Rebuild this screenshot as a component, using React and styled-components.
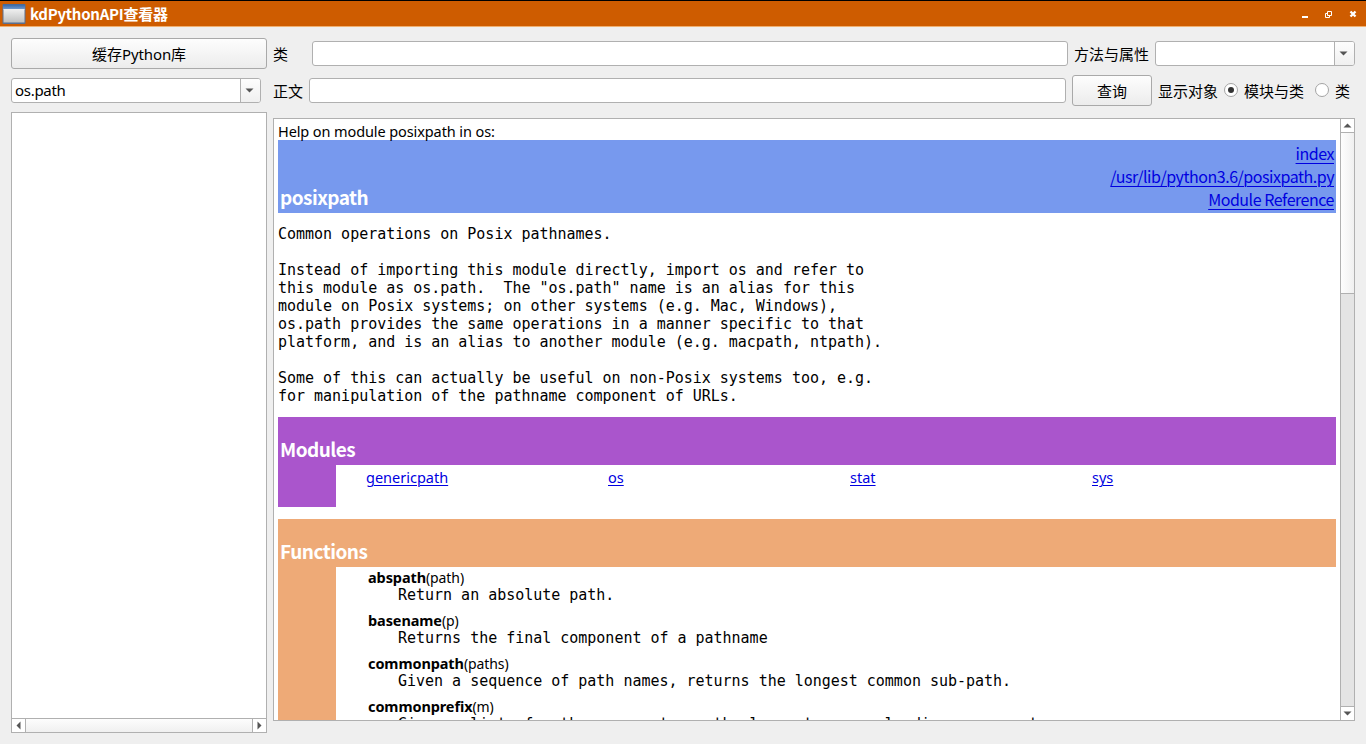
import React from "react";
import styled, { createGlobalStyle } from "styled-components";

const ui = `"Noto Sans", "Noto Sans CJK SC", sans-serif`;
const cjk = `"Noto Sans CJK SC", "Noto Sans", sans-serif`;
const border = "#b0b0b0";

const Global = createGlobalStyle`
  * { box-sizing: border-box; }
  body { margin: 0; background: #efefef; overflow: hidden; }
`;

const Window = styled.div`
  width: 1366px;
  height: 744px;
  display: flex;
  flex-direction: column;
  background: #efefef;
  color: #000;
  font: 15px/20px ${ui};
  white-space: nowrap;
`;

const TitleBar = styled.header`
  height: 27px;
  flex: none;
  display: flex;
  align-items: center;
  padding: 1px 8px 0 2px;
  border-top: 1px solid #000;
  border-bottom: 1px solid #f0b070;
  background: #ce5c00;
  color: #fff;
`;

const Title = styled.h1`
  margin: 0 auto 0 4px;
  font: 700 15px/24px ${cjk};
  letter-spacing: -0.27px;
`;

const Controls = styled.div`
  display: flex;
  gap: 14px;
  svg { display: block; }
`;

const Body = styled.main`
  flex: 1;
  min-height: 0;
  display: flex;
  gap: 6px;
  padding: 11px 11px 0;
`;

const Side = styled.aside`
  width: 256px;
  flex: none;
  display: flex;
  flex-direction: column;
  align-items: flex-start;
`;

const Main = styled.section`
  width: 1082px;
  flex: none;
  display: flex;
  flex-direction: column;
`;

const Button = styled.button`
  width: ${(p) => p.$w}px;
  height: 31px;
  flex: none;
  padding: 0;
  border: 1px solid #a9a9a9;
  border-radius: 3px;
  background: linear-gradient(#fdfdfd, #ececec);
  font: 15px/20px ${cjk};
  color: #000;
`;

const Latin = styled.span`
  font-family: ${ui};
  letter-spacing: -0.1px;
`;

const Field = styled.div`
  width: ${(p) => p.$w}px;
  height: 25px;
  flex: none;
  display: flex;
  margin: ${(p) => p.$m || 0};
  border: 1px solid ${border};
  border-radius: 3px;
  background: #fff;
`;

const Value = styled.span`
  flex: 1;
  padding: 1px 3px;
  letter-spacing: -0.3px;
`;

const DropArrow = styled.span`
  width: 20px;
  display: flex;
  align-items: center;
  justify-content: center;
  padding-right: 2px;
  border-left: 1px solid ${border};
  border-radius: 0 2px 2px 0;
  background: linear-gradient(#fdfdfd, #f0f0f0);
`;

const Row = styled.div`
  display: flex;
  height: ${(p) => p.$h}px;
  align-items: center;
  flex: none;
`;

const Label = styled.label`
  width: ${(p) => p.$w}px;
  flex: none;
  padding: 1px 0 0 ${(p) => p.$pad || 0}px;
  font: 15px/20px ${cjk};
`;

const Radio = styled.span`
  width: 14px;
  height: 14px;
  flex: none;
  display: grid;
  place-items: center;
  margin: 0 6px 2px 0;
  border: 1px solid #a4a4a4;
  border-radius: 50%;
  background: #fff;
  &::after {
    content: "";
    width: 6px;
    height: 6px;
    border-radius: 50%;
    background: ${(p) => (p.$on ? "#333" : "transparent")};
  }
`;

const List = styled.div`
  width: 256px;
  height: 621px;
  flex: none;
  display: flex;
  flex-direction: column;
  justify-content: flex-end;
  margin-top: 9px;
  border: 1px solid ${border};
  background: #fff;
`;

const HScroll = styled.div`
  height: 14px;
  display: flex;
  justify-content: space-between;
  border-top: 1px solid ${border};
  background: linear-gradient(#fdfdfd, #f0f0f0);
`;

const ScrollEnd = styled.span`
  width: ${(p) => p.$w}px;
  height: ${(p) => p.$h}px;
  flex: none;
  display: flex;
  align-items: center;
  justify-content: center;
  background: #fff;
  border: 0 solid ${border};
  border-width: ${(p) => p.$bw};
`;

const Viewer = styled.div`
  height: 603px;
  display: flex;
  margin-top: 6px;
  border: 1px solid ${border};
  background: #fff;
`;

const Doc = styled.article`
  flex: 1;
  min-width: 0;
  overflow: hidden;
  padding: 3px 4px 0;
`;

const VScroll = styled.div`
  width: 14px;
  flex: none;
  display: flex;
  flex-direction: column;
  border-left: 1px solid ${border};
  background: #e4e4e4;
`;

const Thumb = styled.div`
  height: 161px;
  margin-bottom: auto;
  border-bottom: 1px solid ${border};
  background: linear-gradient(90deg, #fdfdfd, #f0f0f0);
`;

const Intro = styled.p`
  height: 18px;
  margin: 0;
  font-size: 14.5px;
  line-height: 19px;
  letter-spacing: -0.1px;
`;

const Band = styled.div`
  height: ${(p) => p.$h}px;
  display: flex;
  justify-content: space-between;
  align-items: flex-end;
  padding: 0 2px 2px;
  background: ${(p) => p.$c};
`;

const Heading = styled.h2`
  margin: 0;
  color: #fff;
  font: 700 19px/29px ${cjk};
  letter-spacing: -0.52px;
`;

const Link = styled.a`
  color: #0000e0;
  text-decoration: underline;
  text-decoration-thickness: 1px;
  text-underline-offset: ${(p) => p.$drop || 2}px;
`;

const HeadLinks = styled.nav`
  display: flex;
  flex-direction: column;
  align-items: flex-end;
  font: 16px/23px ${cjk};
  letter-spacing: -0.47px;
`;

const Pre = styled.pre`
  margin: ${(p) => p.$m || 0};
  font: 15px/18px "DejaVu Sans Mono", monospace;
  letter-spacing: -0.015px;
`;

const Section = styled.section`
  margin-top: 12px;
`;

const Content = styled.div`
  height: ${(p) => p.$h}px;
  border-left: 58px solid ${(p) => p.$c};
`;

const ModuleGrid = styled.div`
  display: grid;
  grid-template-columns: repeat(4, 242px);
  padding: 2px 0 0 30px;
  font-size: 14.5px;
`;

const Entry = styled.div`
  height: 43px;
  padding-left: 32px;
  font-size: 14.5px;
  line-height: 20px;
`;

const Signature = styled.div`
  height: 19px;
  font-size: 14px;
  letter-spacing: -0.1px;
`;

const Fn = styled.b`
  font-size: 14.5px;
  letter-spacing: -0.1px;
`;

function Triangle({ dir }) {
  const d = {
    down: "M0.5 2.5h8l-4 4z",
    up: "M0.5 6.5h8l-4-4z",
    left: "M6.5 0.5v8l-4-4z",
    right: "M2.5 0.5v8l4-4z",
  }[dir];
  return <svg width="9" height="9"><path d={d} fill="#555" /></svg>;
}

function AppIcon() {
  return (
    <svg width="24" height="22" viewBox="0 0 24 22">
      <defs>
        <linearGradient id="pane" x2="0" y2="1">
          <stop stopColor="#f0f0f0" /><stop offset="1" stopColor="#c0c2c2" />
        </linearGradient>
        <linearGradient id="bar" x2="0" y2="1">
          <stop stopColor="#3465a4" /><stop offset="1" stopColor="#7ba3d6" />
        </linearGradient>
      </defs>
      <rect x="0.5" y="1" width="23" height="20" rx="1" fill="#5a6f90" />
      <rect x="1" y="1.5" width="22" height="5.5" fill="url(#bar)" />
      <rect x="1.5" y="6" width="21" height="13.5" fill="url(#pane)" />
    </svg>
  );
}

const intro = `Common operations on Posix pathnames.

Instead of importing this module directly, import os and refer to
this module as os.path.  The "os.path" name is an alias for this
module on Posix systems; on other systems (e.g. Mac, Windows),
os.path provides the same operations in a manner specific to that
platform, and is an alias to another module (e.g. macpath, ntpath).

Some of this can actually be useful on non-Posix systems too, e.g.
for manipulation of the pathname component of URLs.`;

const functions = [
  ["abspath", "path", "Return an absolute path."],
  ["basename", "p", "Returns the final component of a pathname"],
  ["commonpath", "paths", "Given a sequence of path names, returns the longest common sub-path."],
  ["commonprefix", "m", "Given a list of pathnames, returns the longest common leading component"],
];

export default function App() {
  return (
    <Window>
      <Global />
      <TitleBar>
        <AppIcon />
        <Title>kdPythonAPI查看器</Title>
        <Controls>
          <svg width="10" height="10"><path d="M2 7h6v2h-6z" fill="#fff" /></svg>
          <svg width="10" height="10"><path d="M3.5 2.500h4v4h-4zM3 4.500h-1.500v4h4V7" fill="none" stroke="#fff" /></svg>
          <svg width="10" height="10"><path d="M2.500 2.500l5 5M7.500 2.500l-5 5" stroke="#fff" strokeWidth="2.300" /></svg>
        </Controls>
      </TitleBar>
      <Body>
        <Side>
          <Button $w={256}>缓存<Latin>Python</Latin>库</Button>
          <Field $w={250} $m="9px 0 0">
            <Value>os.path</Value>
            <DropArrow><Triangle dir="down" /></DropArrow>
          </Field>
          <List>
            <HScroll>
              <ScrollEnd $w={14} $h={13} $bw="0 1px 0 0"><Triangle dir="left" /></ScrollEnd>
              <ScrollEnd $w={14} $h={13} $bw="0 0 0 1px"><Triangle dir="right" /></ScrollEnd>
            </HScroll>
          </List>
        </Side>
        <Main>
          <Row $h={31}>
            <Label $w={39}>类</Label>
            <Field $w={756} />
            <Label $w={87} $pad={6}>方法与属性</Label>
            <Field $w={200}>
              <Value />
              <DropArrow><Triangle dir="down" /></DropArrow>
            </Field>
          </Row>
          <Row $h={43}>
            <Label $w={36}>正文</Label>
            <Field $w={757} $m="0 6px 0 0" />
            <Button $w={80}>查询</Button>
            <Label $w={72} $pad={6}>显示对象</Label>
            <Radio $on />
            <Label $w={71}>模块与类</Label>
            <Radio />
            <Label $w={16}>类</Label>
          </Row>
          <Viewer>
            <Doc>
              <Intro>Help on module posixpath in os:</Intro>
              <Band $h={73} $c="#7799ee">
                <Heading>posixpath</Heading>
                <HeadLinks>
                  <Link $drop={3}>index</Link>
                  <Link $drop={3}>/usr/lib/python3.6/posixpath.py</Link>
                  <Link $drop={3}>Module Reference</Link>
                </HeadLinks>
              </Band>
              <Pre $m="12px 0 0">{intro}</Pre>
              <Section>
                <Band $h={48} $c="#aa55cc"><Heading>Modules</Heading></Band>
                <Content $h={42} $c="#aa55cc">
                  <ModuleGrid>
                    {["genericpath", "os", "stat", "sys"].map((m) => <span key={m}><Link>{m}</Link></span>)}
                  </ModuleGrid>
                </Content>
              </Section>
              <Section>
                <Band $h={48} $c="#eeaa77"><Heading>Functions</Heading></Band>
                <Content $h={190} $c="#eeaa77">
                  {functions.map(([name, args, text]) => (
                    <Entry key={name}>
                      <Signature><Fn>{name}</Fn>({args})</Signature>
                      <Pre $m="0 0 0 30px">{text}</Pre>
                    </Entry>
                  ))}
                </Content>
              </Section>
            </Doc>
            <VScroll>
              <ScrollEnd $w={13} $h={14} $bw="0 0 1px 0"><Triangle dir="up" /></ScrollEnd>
              <Thumb />
              <ScrollEnd $w={13} $h={14} $bw="1px 0 0 0"><Triangle dir="down" /></ScrollEnd>
            </VScroll>
          </Viewer>
        </Main>
      </Body>
    </Window>
  );
}
